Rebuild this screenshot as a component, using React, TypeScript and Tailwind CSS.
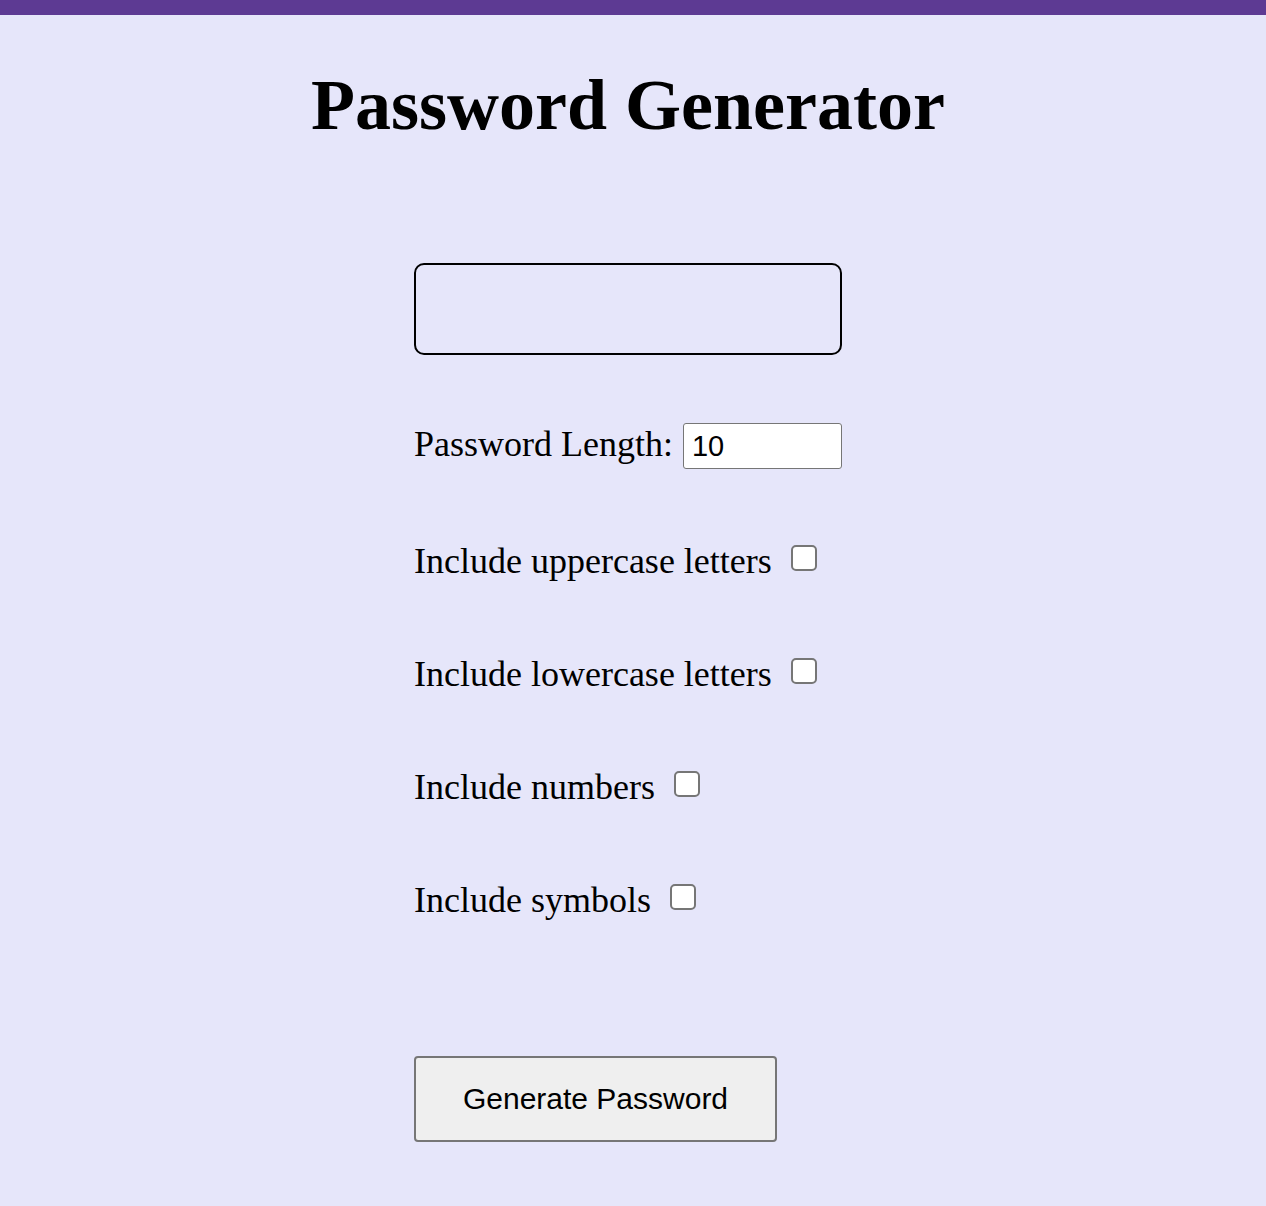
import React from "react";

const serif = { fontFamily: '"Liberation Serif", "Times New Roman", serif' };

function CheckRow({ label }: { label: string }) {
  return (
    <div className="flex items-start whitespace-nowrap" style={serif}>
      <span className="mt-[1px] text-[36px] leading-[41px] text-black">{label}</span>
      <input
        type="checkbox"
        className="appearance-none shrink-0 ml-[19px] mt-[5px] w-[26px] h-[26px] bg-white border-2 border-[#767676] rounded-[5px]"
      />
    </div>
  );
}

export default function App() {
  return (
    <div className="min-h-screen bg-[#e6e6fa]">
      <div className="h-[15px] bg-[#5d3a93]" />
      <div className="flex justify-center pr-[10px]">
        <div className="flex flex-col items-center">
          <h1
            className="mt-[49px] text-[72px] leading-[83px] font-bold text-black whitespace-nowrap"
            style={serif}
          >
            Password Generator
          </h1>
          <div className="w-[428px] mt-[116px] flex flex-col">
            <div className="h-[92px] w-[428px] border-2 border-black rounded-[10px]" />
            <div className="mt-[68px] flex items-start whitespace-nowrap" style={serif}>
              <span className="shrink-0 mt-[1px] text-[36px] leading-[41px] text-black">
                Password Length:
              </span>
              <input
                type="text"
                defaultValue="10"
                className="shrink-0 ml-[10px] w-[159px] h-[46px] bg-white border border-[#767676] rounded-[3px] px-[8px] text-[29px] text-black outline-none"
                style={{ fontFamily: '"Liberation Sans", Arial, sans-serif' }}
              />
            </div>
            <div className="mt-[71px] flex flex-col gap-[71px]">
              <CheckRow label="Include uppercase letters" />
              <CheckRow label="Include lowercase letters" />
              <CheckRow label="Include numbers" />
              <CheckRow label="Include symbols" />
            </div>
            <div className="mt-[135px] mb-[64px]">
              <button
                className="w-[363px] h-[86px] pb-[1px] bg-[#efefef] border-2 border-[#767676] rounded-[4px] text-[30px] text-black"
                style={{ fontFamily: '"Liberation Sans", Arial, sans-serif' }}
              >
                Generate Password
              </button>
            </div>
          </div>
        </div>
      </div>
    </div>
  );
}
